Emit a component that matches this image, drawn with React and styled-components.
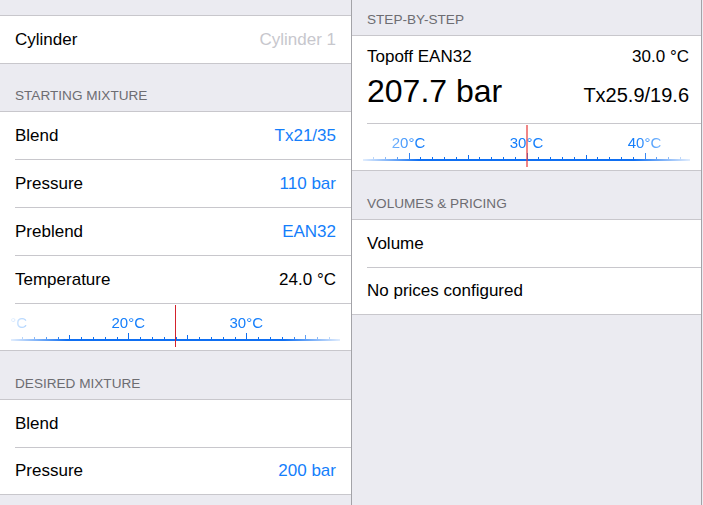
import React from 'react';
import styled, { createGlobalStyle } from 'styled-components';

const GlobalStyle = createGlobalStyle`
  html, body { margin: 0; padding: 0; background: #ebebf1; }
  body {
    font-family: "Liberation Sans", Arial, Helvetica, sans-serif;
    -webkit-font-smoothing: antialiased;
  }
  #root { width: 703px; height: 505px; overflow: hidden; }
`;

const BLUE = '#147efb';
const LINE_BLUE = '#0f6ff2';
const SEP = '#c8c7cc';

const Split = styled.div`
  display: flex;
  width: 702px;
  height: 505px;
`;

const Pane = styled.div`
  width: ${(p) => p.$w}px;
  flex-shrink: 0;
  border-right: 1px solid #a3a3a8;
  display: flex;
  flex-direction: column;
`;

const TopGap = styled.div`
  height: ${(p) => p.$h}px;
  flex-shrink: 0;
`;

const SectionHeader = styled.div`
  height: ${(p) => p.$h ?? 48}px;
  box-sizing: border-box;
  flex-shrink: 0;
  display: flex;
  align-items: flex-end;
  padding: 0 15px 7px;
  font-size: 13.6px;
  line-height: 16px;
  color: #6d6d72;
  text-transform: uppercase;
`;

const Group = styled.div`
  background: #fff;
  border-top: 1px solid ${SEP};
  border-bottom: 1px solid ${SEP};
  flex-shrink: 0;
`;

const Cell = styled.div`
  padding-left: 15px;
  background: #fff;
`;

const CellBody = styled.div`
  height: ${(p) => p.$h ?? 47}px;
  padding-right: ${(p) => p.$pr ?? 15}px;
  border-bottom: 1px solid ${SEP};
  display: flex;
  align-items: center;
  justify-content: space-between;
  font-size: 17px;
  color: #000;

  ${Cell}:last-child > & {
    border-bottom: none;
    height: ${(p) => (p.$h ?? 47) - 1}px;
  }
`;

const Value = styled.span`
  color: ${(p) => (p.$tone === 'blue' ? BLUE : p.$tone === 'muted' ? '#c7c7cd' : '#000')};
`;

const CardBody = styled(CellBody)`
  flex-direction: column;
  align-items: stretch;
  justify-content: flex-start;
  padding-top: 10px;
  box-sizing: content-box;
`;

const CardLine = styled.div`
  display: flex;
  justify-content: space-between;
  align-items: baseline;
  height: ${(p) => p.$h}px;
  line-height: ${(p) => p.$h}px;
  margin-top: ${(p) => p.$mt ?? 0}px;
  font-size: ${(p) => p.$size}px;
`;

const Big = styled.span`
  font-size: 32px;
`;

const Mid = styled.span`
  font-size: 20px;
`;

const RulerRow = styled.div`
  position: relative;
  height: 46px;
  padding: 0 11px;
  display: flex;
  background: #fff;
`;

const RulerScale = styled.div`
  flex: 1;
  overflow: hidden;
  -webkit-mask-image: linear-gradient(to right, rgba(0,0,0,0.12) 0, #000 56px, #000 calc(100% - 56px), rgba(0,0,0,0.12) 100%);
  mask-image: linear-gradient(to right, rgba(0,0,0,0.12) 0, #000 56px, #000 calc(100% - 56px), rgba(0,0,0,0.12) 100%);

  svg { display: block; }
`;

const Indicator = styled.div`
  position: absolute;
  top: 1px;
  left: ${(p) => p.$x}px;
  width: ${(p) => p.$wd}px;
  height: 42px;
  background: ${(p) => p.$color};
`;

function Ruler({ width, value, indicatorX, indicatorW, indicatorColor }) {
  const PX = 11.8;
  const cx = width / 2;
  const ticks = [];
  const labels = [];
  for (let t = Math.floor(value - 20); t <= Math.ceil(value + 20); t++) {
    const x = cx + (t - value) * PX;
    if (x < -30 || x > width + 30) continue;
    const h = t % 10 === 0 ? 6 : t % 5 === 0 ? 4 : 2;
    ticks.push(<rect key={`t${t}`} x={Math.round(x)} y={35 - h} width={1} height={h} fill={LINE_BLUE} />);
    if (t % 10 === 0) {
      labels.push(
        <text
          key={`l${t}`}
          x={x}
          y={23.5}
          textAnchor="middle"
          fontSize="15"
          fontFamily='"Liberation Sans", Arial, sans-serif'
          fill={BLUE}
        >
          {`${t}°C`}
        </text>
      );
    }
  }
  return (
    <RulerRow>
      <RulerScale>
        <svg width={width} height={46}>
          {labels}
          {ticks}
          <rect x={0} y={35} width={width} height={2} fill={LINE_BLUE} />
        </svg>
      </RulerScale>
      <Indicator $x={indicatorX} $wd={indicatorW} $color={indicatorColor} />
    </RulerRow>
  );
}

function Line({ label, value, tone, h }) {
  return (
    <Cell>
      <CellBody $h={h}>
        <span>{label}</span>
        {value && <Value $tone={tone}>{value}</Value>}
      </CellBody>
    </Cell>
  );
}

export default function App() {
  return (
    <>
      <GlobalStyle />
      <Split>
        <Pane $w={351}>
          <TopGap $h={15} />
          <Group>
            <Line label="Cylinder" value="Cylinder 1" tone="muted" h={48} />
          </Group>
          <SectionHeader $h={47}>Starting Mixture</SectionHeader>
          <Group>
            <Line label="Blend" value="Tx21/35" tone="blue" />
            <Line label="Pressure" value="110 bar" tone="blue" />
            <Line label="Preblend" value="EAN32" tone="blue" />
            <Line label="Temperature" value="24.0 °C" />
            <Ruler width={329} value={24.0} indicatorX={175} indicatorW={1} indicatorColor="#d3222c" />
          </Group>
          <SectionHeader>Desired Mixture</SectionHeader>
          <Group>
            <Line label="Blend" />
            <Line label="Pressure" value="200 bar" tone="blue" />
          </Group>
        </Pane>
        <Pane $w={349}>
          <SectionHeader $h={35}>Step-by-step</SectionHeader>
          <Group>
            <Cell>
              <CardBody $h={77} $pr={12}>
                <CardLine $h={22} $size={17}>
                  <span>Topoff EAN32</span>
                  <span>30.0 °C</span>
                </CardLine>
                <CardLine $h={40} $mt={3} $size={17}>
                  <Big>207.7 bar</Big>
                  <Mid>Tx25.9/19.6</Mid>
                </CardLine>
              </CardBody>
            </Cell>
            <Ruler width={327} value={30.0} indicatorX={174} indicatorW={2} indicatorColor="rgba(232, 60, 60, 0.62)" />
          </Group>
          <SectionHeader>Volumes &amp; Pricing</SectionHeader>
          <Group>
            <Line label="Volume" />
            <Line label="No prices configured" />
          </Group>
        </Pane>
      </Split>
    </>
  );
}
